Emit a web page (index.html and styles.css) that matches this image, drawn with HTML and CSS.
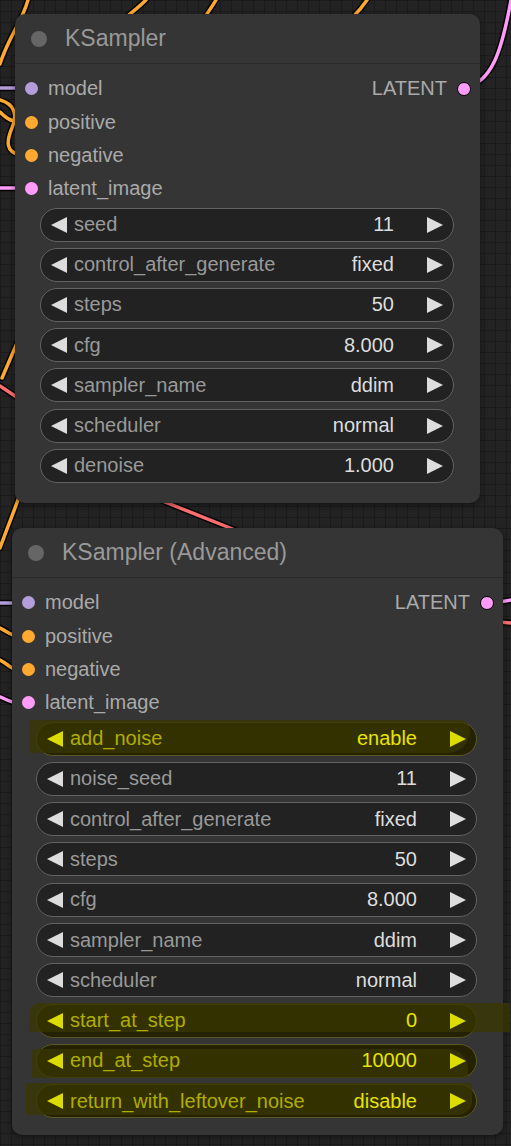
FILE: index.html
```html
<!DOCTYPE html>
<html lang="en">
<head>
<meta charset="UTF-8">
<meta name="viewport" content="width=device-width, initial-scale=1.0">
<title>KSampler nodes</title>
<link rel="stylesheet" href="styles.css">
</head>
<body>

<div class="canvas">

    <!-- links behind the nodes -->
    <svg class="wires" width="511" height="1146" viewBox="0 0 511 1146">
        <g class="wire-shadow">
            <path d="M28,0 C22,22 8,38 0,64"/>
            <path d="M146,0 C138,8 130,14 120,22"/>
            <path d="M216,0 C212,7 208,12 203,20"/>
            <path d="M367,0 C363,6 359,11 352,18"/>
            <path d="M463,88 C492,84 502,50 511,0"/>
            <path d="M0,88 L20,88"/>
            <path d="M0,100 C14,104 18,114 12,128 C6,142 6,152 20,155"/>
            <path d="M20,122 C10,122 4,116 0,112"/>
            <path d="M0,188 L20,188"/>
            <path d="M20,336 C14,350 8,364 2,378"/>
            <path d="M0,386 L18,398"/>
            <path d="M28,470 C22,492 10,520 0,548"/>
            <path d="M150,496 L240,532"/>
            <path d="M0,603 L18,603"/>
            <path d="M0,628 C8,632 12,636 18,636"/>
            <path d="M0,660 C8,664 12,670 18,670"/>
            <path d="M0,697 C8,700 12,703 18,703"/>
            <path d="M490,603 C500,602 506,601 511,600"/>
            <path d="M500,622 L511,623"/>
        </g>
        <g class="wire-orange">
            <path d="M28,0 C22,22 8,38 0,64"/>
            <path d="M146,0 C138,8 130,14 120,22"/>
            <path d="M216,0 C212,7 208,12 203,20"/>
            <path d="M367,0 C363,6 359,11 352,18"/>
            <path d="M0,100 C14,104 18,114 12,128 C6,142 6,152 20,155"/>
            <path d="M20,122 C10,122 4,116 0,112"/>
            <path d="M20,336 C14,350 8,364 2,378"/>
            <path d="M28,470 C22,492 10,520 0,548"/>
            <path d="M0,628 C8,632 12,636 18,636"/>
            <path d="M0,660 C8,664 12,670 18,670"/>
        </g>
        <g class="wire-pink">
            <path d="M463,88 C492,84 502,50 511,0"/>
            <path d="M0,188 L20,188"/>
            <path d="M0,697 C8,700 12,703 18,703"/>
            <path d="M490,603 C500,602 506,601 511,600"/>
        </g>
        <g class="wire-purple">
            <path d="M0,88 L20,88"/>
            <path d="M0,603 L18,603"/>
        </g>
        <g class="wire-red">
            <path d="M0,386 L18,398"/>
            <path d="M150,496 L240,532"/>
            <path d="M500,622 L511,623"/>
        </g>
    </svg>

    <div class="node node-first">
        <div class="node-title"><span class="title-dot"></span>KSampler</div>
        <div class="slots">
            <div class="slot-row">
                <div class="slot"><span class="dot dot-model"></span>model</div>
                <div class="slot slot-out">LATENT<span class="dot dot-latent dot-out"></span></div>
            </div>
            <div class="slot-row"><div class="slot"><span class="dot dot-cond"></span>positive</div></div>
            <div class="slot-row"><div class="slot"><span class="dot dot-cond"></span>negative</div></div>
            <div class="slot-row"><div class="slot"><span class="dot dot-latent"></span>latent_image</div></div>
        </div>
        <div class="widgets">
            <div class="widget"><span class="arrow arrow-left"></span><span class="w-label">seed</span><span class="w-value">11</span><span class="arrow arrow-right"></span></div>
            <div class="widget"><span class="arrow arrow-left"></span><span class="w-label">control_after_generate</span><span class="w-value">fixed</span><span class="arrow arrow-right"></span></div>
            <div class="widget"><span class="arrow arrow-left"></span><span class="w-label">steps</span><span class="w-value">50</span><span class="arrow arrow-right"></span></div>
            <div class="widget"><span class="arrow arrow-left"></span><span class="w-label">cfg</span><span class="w-value">8.000</span><span class="arrow arrow-right"></span></div>
            <div class="widget"><span class="arrow arrow-left"></span><span class="w-label">sampler_name</span><span class="w-value">ddim</span><span class="arrow arrow-right"></span></div>
            <div class="widget"><span class="arrow arrow-left"></span><span class="w-label">scheduler</span><span class="w-value">normal</span><span class="arrow arrow-right"></span></div>
            <div class="widget"><span class="arrow arrow-left"></span><span class="w-label">denoise</span><span class="w-value">1.000</span><span class="arrow arrow-right"></span></div>
        </div>
    </div>

    <div class="node node-advanced">
        <div class="node-title"><span class="title-dot"></span>KSampler (Advanced)</div>
        <div class="slots">
            <div class="slot-row">
                <div class="slot"><span class="dot dot-model"></span>model</div>
                <div class="slot slot-out">LATENT<span class="dot dot-latent dot-out"></span></div>
            </div>
            <div class="slot-row"><div class="slot"><span class="dot dot-cond"></span>positive</div></div>
            <div class="slot-row"><div class="slot"><span class="dot dot-cond"></span>negative</div></div>
            <div class="slot-row"><div class="slot"><span class="dot dot-latent"></span>latent_image</div></div>
        </div>
        <div class="widgets">
            <div class="widget marked mark-a"><span class="arrow arrow-left"></span><span class="w-label">add_noise</span><span class="w-value">enable</span><span class="arrow arrow-right"></span></div>
            <div class="widget"><span class="arrow arrow-left"></span><span class="w-label">noise_seed</span><span class="w-value">11</span><span class="arrow arrow-right"></span></div>
            <div class="widget"><span class="arrow arrow-left"></span><span class="w-label">control_after_generate</span><span class="w-value">fixed</span><span class="arrow arrow-right"></span></div>
            <div class="widget"><span class="arrow arrow-left"></span><span class="w-label">steps</span><span class="w-value">50</span><span class="arrow arrow-right"></span></div>
            <div class="widget"><span class="arrow arrow-left"></span><span class="w-label">cfg</span><span class="w-value">8.000</span><span class="arrow arrow-right"></span></div>
            <div class="widget"><span class="arrow arrow-left"></span><span class="w-label">sampler_name</span><span class="w-value">ddim</span><span class="arrow arrow-right"></span></div>
            <div class="widget"><span class="arrow arrow-left"></span><span class="w-label">scheduler</span><span class="w-value">normal</span><span class="arrow arrow-right"></span></div>
            <div class="widget marked mark-b"><span class="arrow arrow-left"></span><span class="w-label">start_at_step</span><span class="w-value">0</span><span class="arrow arrow-right"></span></div>
            <div class="widget marked mark-c"><span class="arrow arrow-left"></span><span class="w-label">end_at_step</span><span class="w-value">10000</span><span class="arrow arrow-right"></span></div>
            <div class="widget marked mark-d"><span class="arrow arrow-left"></span><span class="w-label">return_with_leftover_noise</span><span class="w-value">disable</span><span class="arrow arrow-right"></span></div>
        </div>
    </div>

</div>

</body>
</html>
```

FILE: styles.css
```css
body, html {
    margin: 0;
    padding: 0;
}

body {
    font-family: "Liberation Sans", Arial, sans-serif;
    background-color: #232323;
}

.canvas {
    position: relative;
    width: 511px;
    height: 1146px;
    overflow: hidden;
    background-color: #232323;
    background-image:
        linear-gradient(to right, #1b1b1b 1px, transparent 1px),
        linear-gradient(to bottom, #1b1b1b 1px, transparent 1px);
    background-size: 11px 11px;
}

.wires {
    position: absolute;
    left: 0;
    top: 0;
}

.wires path {
    fill: none;
    stroke-linecap: round;
}

.wire-shadow path {
    stroke: #000;
    stroke-width: 6.5;
    stroke-opacity: 0.85;
}

.wire-orange path { stroke: #ffa931; stroke-width: 3.5; }
.wire-pink path { stroke: #ff9cf9; stroke-width: 3.5; }
.wire-purple path { stroke: #b39ddb; stroke-width: 3.5; }
.wire-red path { stroke: #ff6e6e; stroke-width: 3.5; }

/* nodes sit on the graph canvas at their own coordinates */
.node {
    position: absolute;
    background-color: #353535;
    border-radius: 10px;
    box-shadow: 0 2px 6px rgba(0, 0, 0, 0.45);
    padding-bottom: 20px;
}

.node-first {
    left: 15px;
    top: 14px;
    width: 465px;
    padding-bottom: 20px;
}

.node-advanced {
    left: 12px;
    top: 528px;
    width: 491px;
    padding-bottom: 17px;
}

.node-title {
    display: flex;
    align-items: center;
    height: 49px;
    border-bottom: 1px solid #2a2a2a;
    color: #999;
    font-size: 23px;
    padding-left: 16px;
}

.title-dot {
    width: 16px;
    height: 16px;
    border-radius: 50%;
    background-color: #666;
    margin-right: 18px;
}

.slots {
    padding-top: 8px;
}

.slot-row {
    display: flex;
    justify-content: space-between;
    align-items: center;
    height: 33.4px;
}

.slot {
    display: flex;
    align-items: center;
    color: #aaa;
    font-size: 20px;
}

.dot {
    width: 13px;
    height: 13px;
    border-radius: 50%;
    margin-left: 10px;
    margin-right: 10px;
}

.dot-model { background-color: #b39ddb; }
.dot-cond { background-color: #ffa931; }
.dot-latent { background-color: #ff9cf9; }

.dot-out {
    width: 12px;
    height: 12px;
    border: 1.5px solid #000;
    margin-left: 10px;
    margin-right: 9px;
}

.widgets {
    display: flex;
    flex-direction: column;
    gap: 6.2px;
    padding-top: 2px;
    margin: 0 26px 0 25px;
}

.node-advanced .widgets {
    margin: 0 26px 0 24px;
    gap: 6.3px;
}

.widget {
    position: relative;
    display: flex;
    align-items: center;
    height: 32px;
    border: 1px solid #626262;
    border-radius: 17px;
    background-color: #222;
    font-size: 20px;
    padding: 0 10px;
}

.arrow {
    width: 0;
    height: 0;
    border-top: 8px solid transparent;
    border-bottom: 8px solid transparent;
    position: relative;
}

.arrow-left {
    border-right: 16px solid #ddd;
}

.arrow-right {
    border-left: 16px solid #ddd;
}

.w-label {
    color: #999;
    margin-left: 7px;
    flex: 1;
    white-space: nowrap;
    position: relative;
}

.w-value {
    color: #ddd;
    margin-right: 33px;
    position: relative;
}

/* yellow marker strokes */
.marked {
    background-color: #242200;
    border-color: #5a5826;
}

.marked::before {
    content: "";
    position: absolute;
    background-color: rgba(58, 55, 0, 0.75);
    z-index: 0;
}

.mark-a::before { left: -8px; right: 6px; top: -3px; bottom: 2px; border-radius: 2px 14px 30px 2px; }
.mark-b::before { left: -8px; right: -34px; top: -2px; bottom: 5px; border-radius: 10px 2px 2px 2px; }
.mark-c::before { left: -5px; right: 8px; top: 4px; bottom: -1px; border-radius: 3px 20px 2px 2px; }
.mark-d::before { left: -11px; right: 4px; top: -2px; bottom: 2px; border-radius: 2px 2px 14px 2px; }

.marked .w-label { color: #b0ad00; }
.marked .w-value { color: #e6e400; }
.marked .arrow-left { border-right-color: #dcdc00; }
.marked .arrow-right { border-left-color: #dcdc00; }
```
